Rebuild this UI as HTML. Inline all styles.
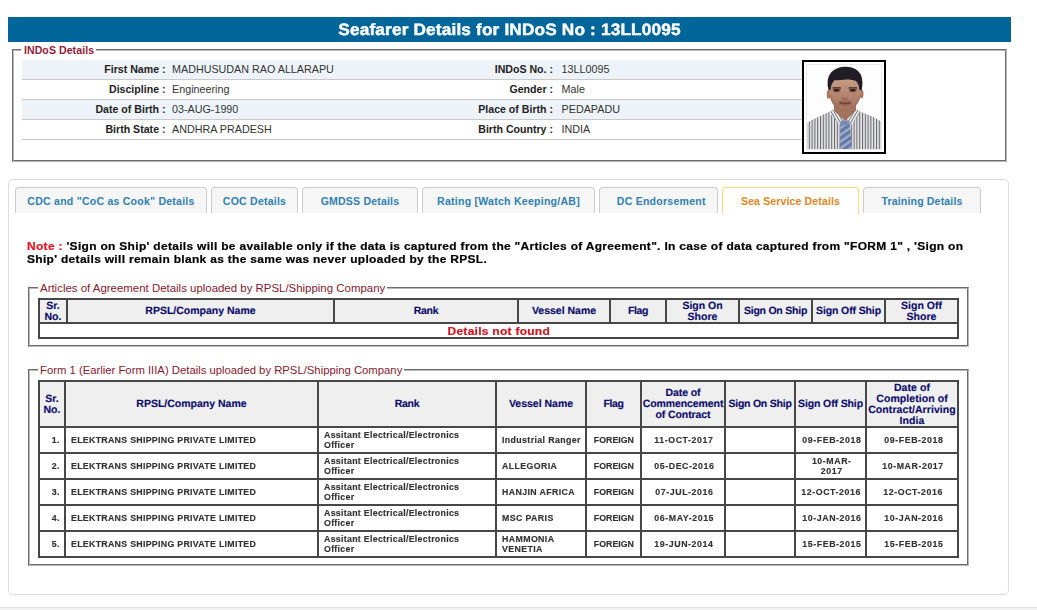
<!DOCTYPE html>
<html>
<head>
<meta charset="utf-8">
<title>Seafarer Details</title>
<style>
html,body{margin:0;padding:0;background:#fff;}
body{width:1037px;height:610px;position:relative;overflow:hidden;font-family:"Liberation Sans",sans-serif;color:#222;}
.abs{position:absolute;}
.sx{display:inline-block;transform:scaleX(1.12);white-space:nowrap;}
#hdr{left:8px;top:17px;width:1003px;height:25px;background:#006699;}
#hdr span{position:absolute;left:0;right:0;top:4px;text-align:center;color:#fff;font-weight:bold;font-size:16.4px;line-height:19px;letter-spacing:.16px;white-space:nowrap;transform:scaleX(1.05);-webkit-text-stroke:.45px #fff;text-rendering:geometricPrecision;}
.fs{position:absolute;border:1px solid;border-color:#6c6c6c #b8b8b8 #b8b8b8 #6c6c6c;box-sizing:border-box;}
.fs:before{content:"";position:absolute;left:0;top:0;right:0;bottom:0;border:1px solid;border-color:#b8b8b8 #6c6c6c #6c6c6c #b8b8b8;}
.lg{position:absolute;background:#fff;white-space:nowrap;color:#86192f;z-index:2;}
.row{position:absolute;left:22px;width:780px;height:19px;border-bottom:1px solid #c9c9c9;}
.row.o{background:#eef3fa;}
.lb{position:absolute;top:0;text-align:right;font-weight:bold;font-size:10.6px;line-height:19px;color:#222;white-space:nowrap;}
.vl{position:absolute;top:0;font-size:10.75px;line-height:19px;color:#333;white-space:nowrap;}
#tabs{left:8px;top:179px;width:1001px;height:416px;box-sizing:border-box;border:1px solid #dcdcdc;border-radius:5px;}
.tab{position:absolute;top:187px;height:26px;box-sizing:border-box;border:1px solid #cccccc;border-bottom:none;border-radius:4px 4px 0 0;background:#f6f6f6;color:#3080b2;font-weight:bold;font-size:10.56px;text-align:center;line-height:27px;white-space:nowrap;}
.tab.act{background:#fff;border-color:#f7db78;color:#df8626;height:27px;}
#note{left:26.5px;top:239.9px;width:880px;font-weight:bold;font-size:10.7px;line-height:13.5px;letter-spacing:.28px;color:#000;white-space:nowrap;transform:scaleX(1.12);transform-origin:left center;-webkit-text-stroke:.2px #000;}
#note b{color:#e8141e;-webkit-text-stroke:.2px #e8141e;}
table.g{position:absolute;border-collapse:collapse;table-layout:fixed;}
table.g td{border:2px solid #474747;padding:0;overflow:hidden;}
table.g td.h{background:#efefef;color:#0b0b6b;font-weight:bold;font-size:10.5px;line-height:11px;letter-spacing:0px;text-rendering:geometricPrecision;text-align:center;vertical-align:middle;white-space:nowrap;-webkit-text-stroke:.15px #0b0b6b;}
table.g td.d{color:#333;font-weight:bold;font-size:8.3px;line-height:10px;vertical-align:middle;-webkit-text-stroke:.15px #333;}
table.g td.l{text-align:left;padding-left:5px;}
table.g td.c{text-align:center;}
#nf{color:#d4141c;font-weight:bold;font-size:10.7px;letter-spacing:.25px;text-align:center;line-height:13px;-webkit-text-stroke:.2px #d4141c;}
#bot{left:0;top:607px;width:1037px;height:3px;background:#f1f1f1;border-top:1px solid #e2e2e2;box-sizing:border-box;}
</style>
</head>
<body>
<div id="hdr" class="abs"><span>Seafarer Details for INDoS No : 13LL0095</span></div>

<!-- INDoS details fieldset -->
<div class="fs" style="left:12px;top:49px;width:995px;height:113px;"></div>
<div class="lg" style="left:21px;top:44px;width:74px;height:12px;font-weight:bold;font-size:10.56px;line-height:12px;padding-left:3px;box-sizing:border-box;letter-spacing:.07px;color:#951a38;width:75px;">INDoS Details</div>

<div class="row o" style="top:60px;"><div class="lb" style="left:0;width:143.5px;">First Name :</div><div class="vl" style="left:150px;">MADHUSUDAN RAO ALLARAPU</div><div class="lb" style="left:380px;width:151px;">INDoS No. :</div><div class="vl" style="left:539.6px;">13LL0095</div></div>
<div class="row" style="top:80px;"><div class="lb" style="left:0;width:143.5px;">Discipline :</div><div class="vl" style="left:150px;">Engineering</div><div class="lb" style="left:380px;width:151px;">Gender :</div><div class="vl" style="left:539.6px;">Male</div></div>
<div class="row o" style="top:100px;"><div class="lb" style="left:0;width:143.5px;">Date of Birth :</div><div class="vl" style="left:150px;">03-AUG-1990</div><div class="lb" style="left:380px;width:151px;">Place of Birth :</div><div class="vl" style="left:539.6px;">PEDAPADU</div></div>
<div class="row" style="top:120px;"><div class="lb" style="left:0;width:143.5px;">Birth State :</div><div class="vl" style="left:150px;">ANDHRA PRADESH</div><div class="lb" style="left:380px;width:151px;">Birth Country :</div><div class="vl" style="left:539.6px;">INDIA</div></div>

<!-- photo -->
<div class="abs" id="photo" style="left:802px;top:60px;width:84px;height:94px;box-sizing:border-box;border:2px solid #000;background:#fff;">
<svg width="76" height="86" viewBox="0 0 76 86" style="position:absolute;left:2px;top:2px;">
<defs>
<filter id="bl" x="-5%" y="-5%" width="110%" height="110%"><feGaussianBlur stdDeviation="0.7"/></filter>
<pattern id="st" width="2.8" height="4" patternUnits="userSpaceOnUse"><rect width="2.8" height="4" fill="#e6e6e6"/><rect x="0" width="1.05" height="4" fill="#66676d"/></pattern>
<pattern id="stL" width="2.6" height="4" patternUnits="userSpaceOnUse" patternTransform="rotate(-30)"><rect width="2.6" height="4" fill="#ededed"/><rect x="0" width="0.9" height="4" fill="#75767c"/></pattern>
<pattern id="stR" width="2.6" height="4" patternUnits="userSpaceOnUse" patternTransform="rotate(30)"><rect width="2.6" height="4" fill="#ededed"/><rect x="0" width="0.9" height="4" fill="#75767c"/></pattern>
<pattern id="tie" width="4" height="5.5" patternUnits="userSpaceOnUse" patternTransform="rotate(-35)"><rect width="4" height="5.5" fill="#7587b3"/><rect y="0" width="4" height="1.5" fill="#a9b6d4"/><rect y="2.8" width="4" height="1.2" fill="#5d6d9a"/></pattern>
<clipPath id="cp"><rect x="1" y="1" width="74" height="84"/></clipPath>
<linearGradient id="sk" x1="0" y1="0" x2="0" y2="1"><stop offset="0" stop-color="#caa18b"/><stop offset=".45" stop-color="#b98a73"/><stop offset="1" stop-color="#a2715d"/></linearGradient>
</defs>
<rect x="0" y="0" width="76" height="86" fill="#e9e9e9"/>
<rect x="1" y="1" width="74" height="84" fill="#fdfdfd"/>
<g clip-path="url(#cp)" filter="url(#bl)">
 <!-- body / shirt -->
 <path d="M1 86 L1 59 Q5 56 12 53 L26 46.5 L51.5 46.5 L65 52 Q72 55 75 57.5 L75 86 Z" fill="url(#st)"/>
 <!-- neck -->
 <path d="M28 38 L28 49 L39 60 L50 49 L50 38 Z" fill="#a3725c"/>
 <!-- collar -->
 <path d="M26 45 L23.5 49 L33.8 61 L39 57 Z" fill="url(#stL)"/>
 <path d="M51.5 45 L54 49 L45 61 L39 57 Z" fill="url(#stR)"/>
 <!-- tie -->
 <path d="M35 57 L43 57 L44 62 L46 86 L33.6 86 L34.4 62 Z" fill="url(#tie)"/>
 <path d="M35 56.6 L43 56.6 L43.8 61.5 L34.6 61.5 Z" fill="#7889b5"/>
 <!-- ears -->
 <ellipse cx="22.6" cy="30.5" rx="1.9" ry="4.2" fill="#a9765f"/>
 <ellipse cx="55.6" cy="30" rx="1.9" ry="4.2" fill="#a9765f"/>
 <!-- face -->
 <path d="M23.2 22 Q22.4 33 26.5 39.5 Q32 46.2 39 46.2 Q46 46.2 51.5 39.5 Q55.8 33 55.2 22 Q51 12 39 12 Q27 12 23.2 22 Z" fill="url(#sk)"/>
 <!-- hair -->
 <path d="M22.6 26.5 Q19.5 15 25 8.5 Q31 2.2 41 2.8 Q51 3.6 54.8 10.5 Q57.6 17 55.6 26.5 L53.4 26 Q53 20 50 17 Q46 15 40 15.6 Q32 16.6 28.4 16.2 Q25 20 24.4 26 Z" fill="#201f28"/>
 <!-- brows / eyes -->
 <rect x="26.5" y="23.2" width="8.5" height="1.5" rx=".7" fill="#2a211f"/>
 <rect x="42.6" y="23.2" width="8.5" height="1.5" rx=".7" fill="#2a211f"/>
 <ellipse cx="30.6" cy="26" rx="4.2" ry="2.4" fill="#8a5f4d" opacity=".75"/>
 <ellipse cx="46.8" cy="26" rx="4.2" ry="2.4" fill="#8a5f4d" opacity=".75"/>
 <ellipse cx="30.6" cy="26.3" rx="3" ry="1.25" fill="#2b201e"/>
 <ellipse cx="46.8" cy="26.3" rx="3" ry="1.25" fill="#2b201e"/>
 <!-- nose shadow & mouth -->
 <path d="M36 34 Q38.8 36 41.6 34" stroke="#8a5f4c" stroke-width="1.3" fill="none"/>
 <ellipse cx="39" cy="39" rx="7.5" ry="3.4" fill="#95644f" opacity=".5"/>
 <path d="M33.8 38.6 Q39 40.4 44.6 38.6" stroke="#74423d" stroke-width="1.8" fill="none"/>
 <!-- cheek/jaw shading -->
 <path d="M24.6 31 Q26.5 40 33 44.8" stroke="#98695a" stroke-width="1.8" fill="none" opacity=".55"/>
 <path d="M54 31 Q52 40 45.5 44.8" stroke="#98695a" stroke-width="1.8" fill="none" opacity=".55"/>
</g>
</svg>

</div>

<!-- tabs -->
<div id="tabs" class="abs"></div>
<div class="tab" style="left:15px;width:192px;letter-spacing:.23px;">CDC and "CoC as Cook" Details</div>
<div class="tab" style="left:211px;width:87px;letter-spacing:.22px;">COC Details</div>
<div class="tab" style="left:302px;width:116px;letter-spacing:.18px;">GMDSS Details</div>
<div class="tab" style="left:422px;width:173px;letter-spacing:.25px;">Rating [Watch Keeping/AB]</div>
<div class="tab" style="left:599px;width:119px;letter-spacing:.24px;padding-left:5.5px;">DC Endorsement</div>
<div class="tab act" style="left:722px;width:137px;letter-spacing:.12px;">Sea Service Details</div>
<div class="tab" style="left:863px;width:118px;letter-spacing:.16px;">Training Details</div>

<div id="note" class="abs"><b>Note :</b> 'Sign on Ship' details will be available only if the data is captured from the "Articles of Agreement". In case of data captured from "FORM 1" , 'Sign on<br>Ship' details will remain blank as the same was never uploaded by the RPSL.</div>

<!-- Articles fieldset -->
<div class="fs" style="left:28px;top:287px;width:941px;height:60px;"></div>
<div class="lg" style="left:38px;top:282.4px;height:13px;font-size:11.45px;line-height:13px;padding:0 2px;">Articles of Agreement Details uploaded by RPSL/Shipping Company</div>

<table class="g" style="left:38px;top:298px;width:921px;">
<colgroup><col style="width:28px"><col style="width:267px"><col style="width:184px"><col style="width:92px"><col style="width:56px"><col style="width:73px"><col style="width:73px"><col style="width:73px"><col style="width:73px"></colgroup>
<tr style="height:24px;"><td class="h"><span class="sx" style="position:relative;top:.9px;transform-origin:center center;transform:scaleX(1);">Sr.<br>No.</span></td><td class="h"><span class="sx" style="transform-origin:center center;transform:scaleX(1);letter-spacing:0px;">RPSL/Company Name</span></td><td class="h"><span class="sx" style="transform-origin:center center;transform:scaleX(1);letter-spacing:-0.27px;">Rank</span></td><td class="h"><span class="sx" style="transform-origin:center center;transform:scaleX(1);letter-spacing:0px;">Vessel Name</span></td><td class="h"><span class="sx" style="transform-origin:center center;transform:scaleX(1);letter-spacing:-0.45px;">Flag</span></td><td class="h"><span class="sx" style="position:relative;top:.9px;transform-origin:center center;transform:scaleX(1);">Sign On<br>Shore</span></td><td class="h"><span class="sx" style="transform-origin:center center;transform:scaleX(1);letter-spacing:-0.23px;">Sign On Ship</span></td><td class="h"><span class="sx" style="transform-origin:center center;transform:scaleX(1);letter-spacing:-0.12px;">Sign Off Ship</span></td><td class="h"><span class="sx" style="position:relative;top:.9px;transform-origin:center center;transform:scaleX(1);">Sign Off<br>Shore</span></td></tr>
<tr style="height:15px;"><td colspan="9" id="nf"><span class="sx" style="position:relative;top:.75px;transform-origin:center center;">Details not found</span></td></tr>
</table>

<!-- Form 1 fieldset -->
<div class="fs" style="left:28px;top:369px;width:941px;height:197px;"></div>
<div class="lg" style="left:38px;top:364.4px;height:13px;font-size:11.3px;line-height:13px;padding:0 2px;">Form 1 (Earlier Form IIIA) Details uploaded by RPSL/Shipping Company</div>

<table class="g" style="left:38px;top:380px;width:921px;">
<colgroup><col style="width:26px"><col style="width:253px"><col style="width:178px"><col style="width:90px"><col style="width:55px"><col style="width:84px"><col style="width:70px"><col style="width:71px"><col style="width:92px"></colgroup>
<tr style="height:46px;"><td class="h"><span class="sx" style="position:relative;top:1px;transform-origin:center center;transform:scaleX(1);">Sr.<br>No.</span></td><td class="h"><span class="sx" style="transform-origin:center center;transform:scaleX(1);letter-spacing:0px;">RPSL/Company Name</span></td><td class="h"><span class="sx" style="transform-origin:center center;transform:scaleX(1);letter-spacing:-0.27px;">Rank</span></td><td class="h"><span class="sx" style="transform-origin:center center;transform:scaleX(1);letter-spacing:0px;">Vessel Name</span></td><td class="h"><span class="sx" style="transform-origin:center center;transform:scaleX(1);letter-spacing:-0.45px;">Flag</span></td><td class="h"><span class="sx" style="transform-origin:center center;transform:scaleX(1);letter-spacing:-0.09px;">Date of<br>Commencement<br>of Contract</span></td><td class="h"><span class="sx" style="transform-origin:center center;transform:scaleX(1);letter-spacing:-0.23px;">Sign On Ship</span></td><td class="h"><span class="sx" style="transform-origin:center center;transform:scaleX(1);letter-spacing:-0.12px;">Sign Off Ship</span></td><td class="h"><span class="sx" style="position:relative;top:.75px;transform-origin:center center;transform:scaleX(1);letter-spacing:0.07px;">Date of<br>Completion of<br>Contract/Arriving<br>India</span></td></tr>
<tr style="height:26px;"><td class="d c" style="padding-left:8px"><span class="sx" style="transform-origin:center center;transform:scaleX(1.06);letter-spacing:0.28px;">1.</span></td><td class="d l"><span class="sx" style="transform-origin:left center;transform:scaleX(1.06);letter-spacing:0.28px;">ELEKTRANS SHIPPING PRIVATE LIMITED</span></td><td class="d l"><span class="sx" style="transform-origin:left center;transform:scaleX(1.06);letter-spacing:0.28px;">Assitant Electrical/Electronics<br>Officer</span></td><td class="d l"><span class="sx" style="transform-origin:left center;transform:scaleX(1.06);letter-spacing:0.36000000000000004px;">Industrial Ranger</span></td><td class="d c" style="padding-left:1.5px"><span class="sx" style="transform-origin:center center;transform:scaleX(1.06);letter-spacing:0px;">FOREIGN</span></td><td class="d c" style="padding-left:2.6px"><span class="sx" style="transform-origin:center center;transform:scaleX(1.06);letter-spacing:0.54px;">11-OCT-2017</span></td><td class="d"></td><td class="d c" style="padding-left:2px"><span class="sx" style="transform-origin:center center;transform:scaleX(1.06);letter-spacing:0.54px;">09-FEB-2018</span></td><td class="d c" style="padding-left:2.8px"><span class="sx" style="transform-origin:center center;transform:scaleX(1.06);letter-spacing:0.54px;">09-FEB-2018</span></td></tr>
<tr style="height:26px;"><td class="d c" style="padding-left:8px"><span class="sx" style="transform-origin:center center;transform:scaleX(1.06);letter-spacing:0.28px;">2.</span></td><td class="d l"><span class="sx" style="transform-origin:left center;transform:scaleX(1.06);letter-spacing:0.28px;">ELEKTRANS SHIPPING PRIVATE LIMITED</span></td><td class="d l"><span class="sx" style="transform-origin:left center;transform:scaleX(1.06);letter-spacing:0.28px;">Assitant Electrical/Electronics<br>Officer</span></td><td class="d l"><span class="sx" style="transform-origin:left center;transform:scaleX(1.06);letter-spacing:0.36000000000000004px;">ALLEGORIA</span></td><td class="d c" style="padding-left:1.5px"><span class="sx" style="transform-origin:center center;transform:scaleX(1.06);letter-spacing:0px;">FOREIGN</span></td><td class="d c" style="padding-left:2.6px"><span class="sx" style="transform-origin:center center;transform:scaleX(1.06);letter-spacing:0.54px;">05-DEC-2016</span></td><td class="d"></td><td class="d c" style="padding-left:2px"><span class="sx" style="transform-origin:center center;transform:scaleX(1.06);letter-spacing:0.54px;">10-MAR-<br>2017</span></td><td class="d c" style="padding-left:2.8px"><span class="sx" style="transform-origin:center center;transform:scaleX(1.06);letter-spacing:0.54px;">10-MAR-2017</span></td></tr>
<tr style="height:26px;"><td class="d c" style="padding-left:8px"><span class="sx" style="transform-origin:center center;transform:scaleX(1.06);letter-spacing:0.28px;">3.</span></td><td class="d l"><span class="sx" style="transform-origin:left center;transform:scaleX(1.06);letter-spacing:0.28px;">ELEKTRANS SHIPPING PRIVATE LIMITED</span></td><td class="d l"><span class="sx" style="transform-origin:left center;transform:scaleX(1.06);letter-spacing:0.28px;">Assitant Electrical/Electronics<br>Officer</span></td><td class="d l"><span class="sx" style="transform-origin:left center;transform:scaleX(1.06);letter-spacing:0.36000000000000004px;">HANJIN AFRICA</span></td><td class="d c" style="padding-left:1.5px"><span class="sx" style="transform-origin:center center;transform:scaleX(1.06);letter-spacing:0px;">FOREIGN</span></td><td class="d c" style="padding-left:2.6px"><span class="sx" style="transform-origin:center center;transform:scaleX(1.06);letter-spacing:0.54px;">07-JUL-2016</span></td><td class="d"></td><td class="d c" style="padding-left:2px"><span class="sx" style="transform-origin:center center;transform:scaleX(1.06);letter-spacing:0.54px;">12-OCT-2016</span></td><td class="d c" style="padding-left:2.8px"><span class="sx" style="transform-origin:center center;transform:scaleX(1.06);letter-spacing:0.54px;">12-OCT-2016</span></td></tr>
<tr style="height:26px;"><td class="d c" style="padding-left:8px"><span class="sx" style="transform-origin:center center;transform:scaleX(1.06);letter-spacing:0.28px;">4.</span></td><td class="d l"><span class="sx" style="transform-origin:left center;transform:scaleX(1.06);letter-spacing:0.28px;">ELEKTRANS SHIPPING PRIVATE LIMITED</span></td><td class="d l"><span class="sx" style="transform-origin:left center;transform:scaleX(1.06);letter-spacing:0.28px;">Assitant Electrical/Electronics<br>Officer</span></td><td class="d l"><span class="sx" style="transform-origin:left center;transform:scaleX(1.06);letter-spacing:0.36000000000000004px;">MSC PARIS</span></td><td class="d c" style="padding-left:1.5px"><span class="sx" style="transform-origin:center center;transform:scaleX(1.06);letter-spacing:0px;">FOREIGN</span></td><td class="d c" style="padding-left:2.6px"><span class="sx" style="transform-origin:center center;transform:scaleX(1.06);letter-spacing:0.54px;">06-MAY-2015</span></td><td class="d"></td><td class="d c" style="padding-left:2px"><span class="sx" style="transform-origin:center center;transform:scaleX(1.06);letter-spacing:0.54px;">10-JAN-2016</span></td><td class="d c" style="padding-left:2.8px"><span class="sx" style="transform-origin:center center;transform:scaleX(1.06);letter-spacing:0.54px;">10-JAN-2016</span></td></tr>
<tr style="height:26px;"><td class="d c" style="padding-left:8px"><span class="sx" style="transform-origin:center center;transform:scaleX(1.06);letter-spacing:0.28px;">5.</span></td><td class="d l"><span class="sx" style="transform-origin:left center;transform:scaleX(1.06);letter-spacing:0.28px;">ELEKTRANS SHIPPING PRIVATE LIMITED</span></td><td class="d l"><span class="sx" style="transform-origin:left center;transform:scaleX(1.06);letter-spacing:0.28px;">Assitant Electrical/Electronics<br>Officer</span></td><td class="d l"><span class="sx" style="transform-origin:left center;transform:scaleX(1.06);letter-spacing:0.36000000000000004px;">HAMMONIA<br>VENETIA</span></td><td class="d c" style="padding-left:1.5px"><span class="sx" style="transform-origin:center center;transform:scaleX(1.06);letter-spacing:0px;">FOREIGN</span></td><td class="d c" style="padding-left:2.6px"><span class="sx" style="transform-origin:center center;transform:scaleX(1.06);letter-spacing:0.54px;">19-JUN-2014</span></td><td class="d"></td><td class="d c" style="padding-left:2px"><span class="sx" style="transform-origin:center center;transform:scaleX(1.06);letter-spacing:0.54px;">15-FEB-2015</span></td><td class="d c" style="padding-left:2.8px"><span class="sx" style="transform-origin:center center;transform:scaleX(1.06);letter-spacing:0.54px;">15-FEB-2015</span></td></tr>
</table>

<div id="bot" class="abs"></div>
</body>
</html>
